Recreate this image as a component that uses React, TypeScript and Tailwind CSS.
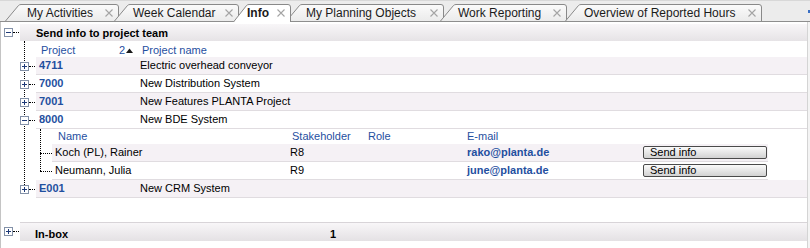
import React from 'react'

const blue = 'text-[#1f4f9f]'

type TabDef = {
  label: string
  w: number
  wc: string
  ml: string
  pl: string
  z: string
  active?: boolean
}

const tabs: TabDef[] = [
  { label: 'My Activities', w: 114, wc: 'w-[114px]', ml: 'ml-[5px]', pl: 'pl-[22px]', z: 'z-[1]' },
  { label: 'Week Calendar', w: 125, wc: 'w-[125px]', ml: '-ml-[5px]', pl: 'pl-[19px]', z: 'z-[2]' },
  { label: 'Info', w: 58, wc: 'w-[58px]', ml: '-ml-[6px]', pl: 'pl-[14px]', z: 'z-[10]', active: true },
  { label: 'My Planning Objects', w: 158, wc: 'w-[158px]', ml: '-ml-[5px]', pl: 'pl-[20px]', z: 'z-[4]' },
  { label: 'Work Reporting', w: 127, wc: 'w-[127px]', ml: '-ml-[4px]', pl: 'pl-[18px]', z: 'z-[5]' },
  { label: 'Overview of Reported Hours', w: 197, wc: 'w-[197px]', ml: '-ml-[2px]', pl: 'pl-[19px]', z: 'z-[6]' },
]

function CloseX() {
  return (
    <svg width="8" height="8" viewBox="0 0 8 8" className="block shrink-0">
      <path d="M0.5 0.5L7.5 7.5M7.5 0.5L0.5 7.5" stroke="#a4a4a4" strokeWidth="1.1" />
    </svg>
  )
}

function Tab({ t }: { t: TabDef }) {
  const h = t.active ? 18 : 17
  const w = t.w
  const d = `M0.5 ${h} L13.5 1.5 Q14.5 0.5 16 0.5 H${w - 3} Q${w - 0.5} 0.5 ${w - 0.5} 3 V${h}`
  return (
    <div className={`relative shrink-0 ${t.wc} ${t.ml} ${t.z} ${t.active ? 'h-[18px] -mb-px' : 'h-[17px]'}`}>
      <svg className="absolute left-0 top-0" width={w} height={h}>
        <path d={d + ' Z'} fill={t.active ? '#ffffff' : 'url(#tabfill)'} />
        <path d={d} fill="none" stroke="#898989" />
      </svg>
      <div className={`relative flex h-[17px] items-center justify-between pr-[6px] ${t.pl}`}>
        <span className={`text-[12px] leading-none text-[#1b1b1b] ${t.active ? 'font-bold' : ''}`}>{t.label}</span>
        <CloseX />
      </div>
    </div>
  )
}

function Toggle({ open }: { open?: boolean }) {
  return (
    <svg width="9" height="9" viewBox="0 0 9 9" className="block">
      <rect x="0.5" y="0.5" width="8" height="8" fill="#ffffff" stroke="#8391a8" />
      <path d="M2 4.5h5" stroke="#1e3a78" />
      {!open && <path d="M4.5 2v5" stroke="#1e3a78" />}
    </svg>
  )
}

function ProjectRow({ id, name, shaded, open }: { id: string; name: string; shaded?: boolean; open?: boolean }) {
  return (
    <div className="flex h-[18px]">
      <div className="flex w-[35px] shrink-0 items-center">
        <div className="relative z-10 ml-[19px]">
          <Toggle open={open} />
        </div>
        <div className="w-[6px] border-t border-dotted border-black" />
      </div>
      <div
        className={`flex flex-1 items-center border-b border-[#e0dce0] text-[11px] ${
          shaded ? 'bg-[#f5f1f5]' : 'bg-white'
        }`}
      >
        <span className={`w-[104px] pl-[3px] font-bold ${blue}`}>{id}</span>
        <span className="text-black">{name}</span>
      </div>
    </div>
  )
}

function SubRow({ name, sh, mail, shaded }: { name: string; sh: string; mail: string; shaded?: boolean }) {
  return (
    <div className="flex h-[18px]">
      <div className="flex w-[51px] shrink-0 items-center">
        <div className="ml-[39px] w-[12px] border-t border-dotted border-black" />
      </div>
      <div
        className={`flex w-[716px] items-center border-b border-[#e0dce0] text-[11px] ${
          shaded ? 'bg-[#f5f1f5]' : 'bg-white'
        }`}
      >
        <span className="w-[238px] pl-[3px] text-black">{name}</span>
        <span className="w-[177px] text-black">{sh}</span>
        <span className={`w-[176px] font-bold ${blue}`}>{mail}</span>
        <button className="flex h-[13px] w-[124px] items-center rounded-[2px] border border-[#4a4a4a] bg-gradient-to-b from-[#fbfbfb] to-[#d2d2d2] pl-[6px] text-[11px] leading-none text-black">
          Send info
        </button>
      </div>
    </div>
  )
}

export default function App() {
  return (
    <div className="relative h-[248px] w-[810px] overflow-hidden bg-white font-['Liberation_Sans',Arial,sans-serif]">
      <svg width="0" height="0" className="absolute">
        <defs>
          <linearGradient id="tabfill" x1="0" y1="0" x2="0" y2="1">
            <stop offset="0" stopColor="#fbfbfb" />
            <stop offset="1" stopColor="#ebebeb" />
          </linearGradient>
        </defs>
      </svg>

      {/* tab strip */}
      <div className="flex h-[22px] items-end border-b border-[#8e8e8e] border-t border-t-[#d8d8d8] bg-[#ececec]">
        {tabs.map((t) => (
          <Tab key={t.label} t={t} />
        ))}
        <div className="ml-auto mb-[8px] h-[3px] w-[2px] bg-[#3a6fc4]" />
      </div>

      <div className="flex h-[226px]">
        <div className="w-px bg-[#c4c4c4]" />
        <div className="w-[806px]">
          <div className="h-[2px]" />

          {/* section header */}
          <div className="flex h-[17px]">
            <div className="flex w-[19px] shrink-0 items-center">
              <div className="ml-[3px]">
                <Toggle open />
              </div>
              <div className="w-[6px] border-t border-dotted border-black" />
            </div>
            <div className="flex flex-1 items-center bg-gradient-to-b from-[#f8f6f8] to-[#e6e3e6] pl-[16px] pt-[2px] text-[11px] font-bold text-black">
              Send info to project team
            </div>
          </div>

          {/* tree */}
          <div className="relative">
            <div className="absolute left-[23px] top-0 h-[148px] border-l border-dotted border-black" />

            <div className={`flex h-[16px] items-center pl-[40px] pt-[2px] text-[11px] ${blue}`}>
              <span className="w-[78px]">Project</span>
              <span className="flex w-[23px] items-center gap-[1px]">
                2
                <svg width="7" height="5" viewBox="0 0 7 5" className="block">
                  <path d="M0 5L3.5 0.5L7 5Z" fill="#1a1a1a" />
                </svg>
              </span>
              <span>Project name</span>
            </div>

            <ProjectRow id="4711" name="Electric overhead conveyor" shaded />
            <ProjectRow id="7000" name="New Distribution System" />
            <ProjectRow id="7001" name="New Features PLANTA Project" shaded />
            <ProjectRow id="8000" name="New BDE System" open />

            <div className="relative">
              <div className="absolute left-[39px] top-0 h-[42px] border-l border-dotted border-black" />
              <div className={`flex h-[15px] items-center pl-[57px] text-[11px] ${blue}`}>
                <span className="w-[234px]">Name</span>
                <span className="w-[76px]">Stakeholder</span>
                <span className="w-[99px]">Role</span>
                <span>E-mail</span>
              </div>
              <SubRow name="Koch (PL), Rainer" sh="R8" mail="rako@planta.de" shaded />
              <SubRow name="Neumann, Julia" sh="R9" mail="june@planta.de" />
            </div>

            <ProjectRow id="E001" name="New CRM System" shaded />
          </div>

          <div className="h-[24px]" />

          {/* in-box */}
          <div className="flex h-[19px]">
            <div className="flex w-[19px] shrink-0 items-center">
              <div className="ml-[3px]">
                <Toggle />
              </div>
              <div className="w-[6px] border-t border-dotted border-black" />
            </div>
            <div className="flex flex-1 items-center border-t border-[#d8d4d8] bg-gradient-to-b from-[#f8f6f8] to-[#e4e1e4] pl-[15px] pt-[4px] text-[11px] font-bold text-black">
              <span className="w-[295px]">In-box</span>
              <span>1</span>
            </div>
          </div>
        </div>
        <div className="w-px bg-[#d4d4d4]" />
        <div className="w-[2px] bg-[#f4f4f4]" />
      </div>
    </div>
  )
}
